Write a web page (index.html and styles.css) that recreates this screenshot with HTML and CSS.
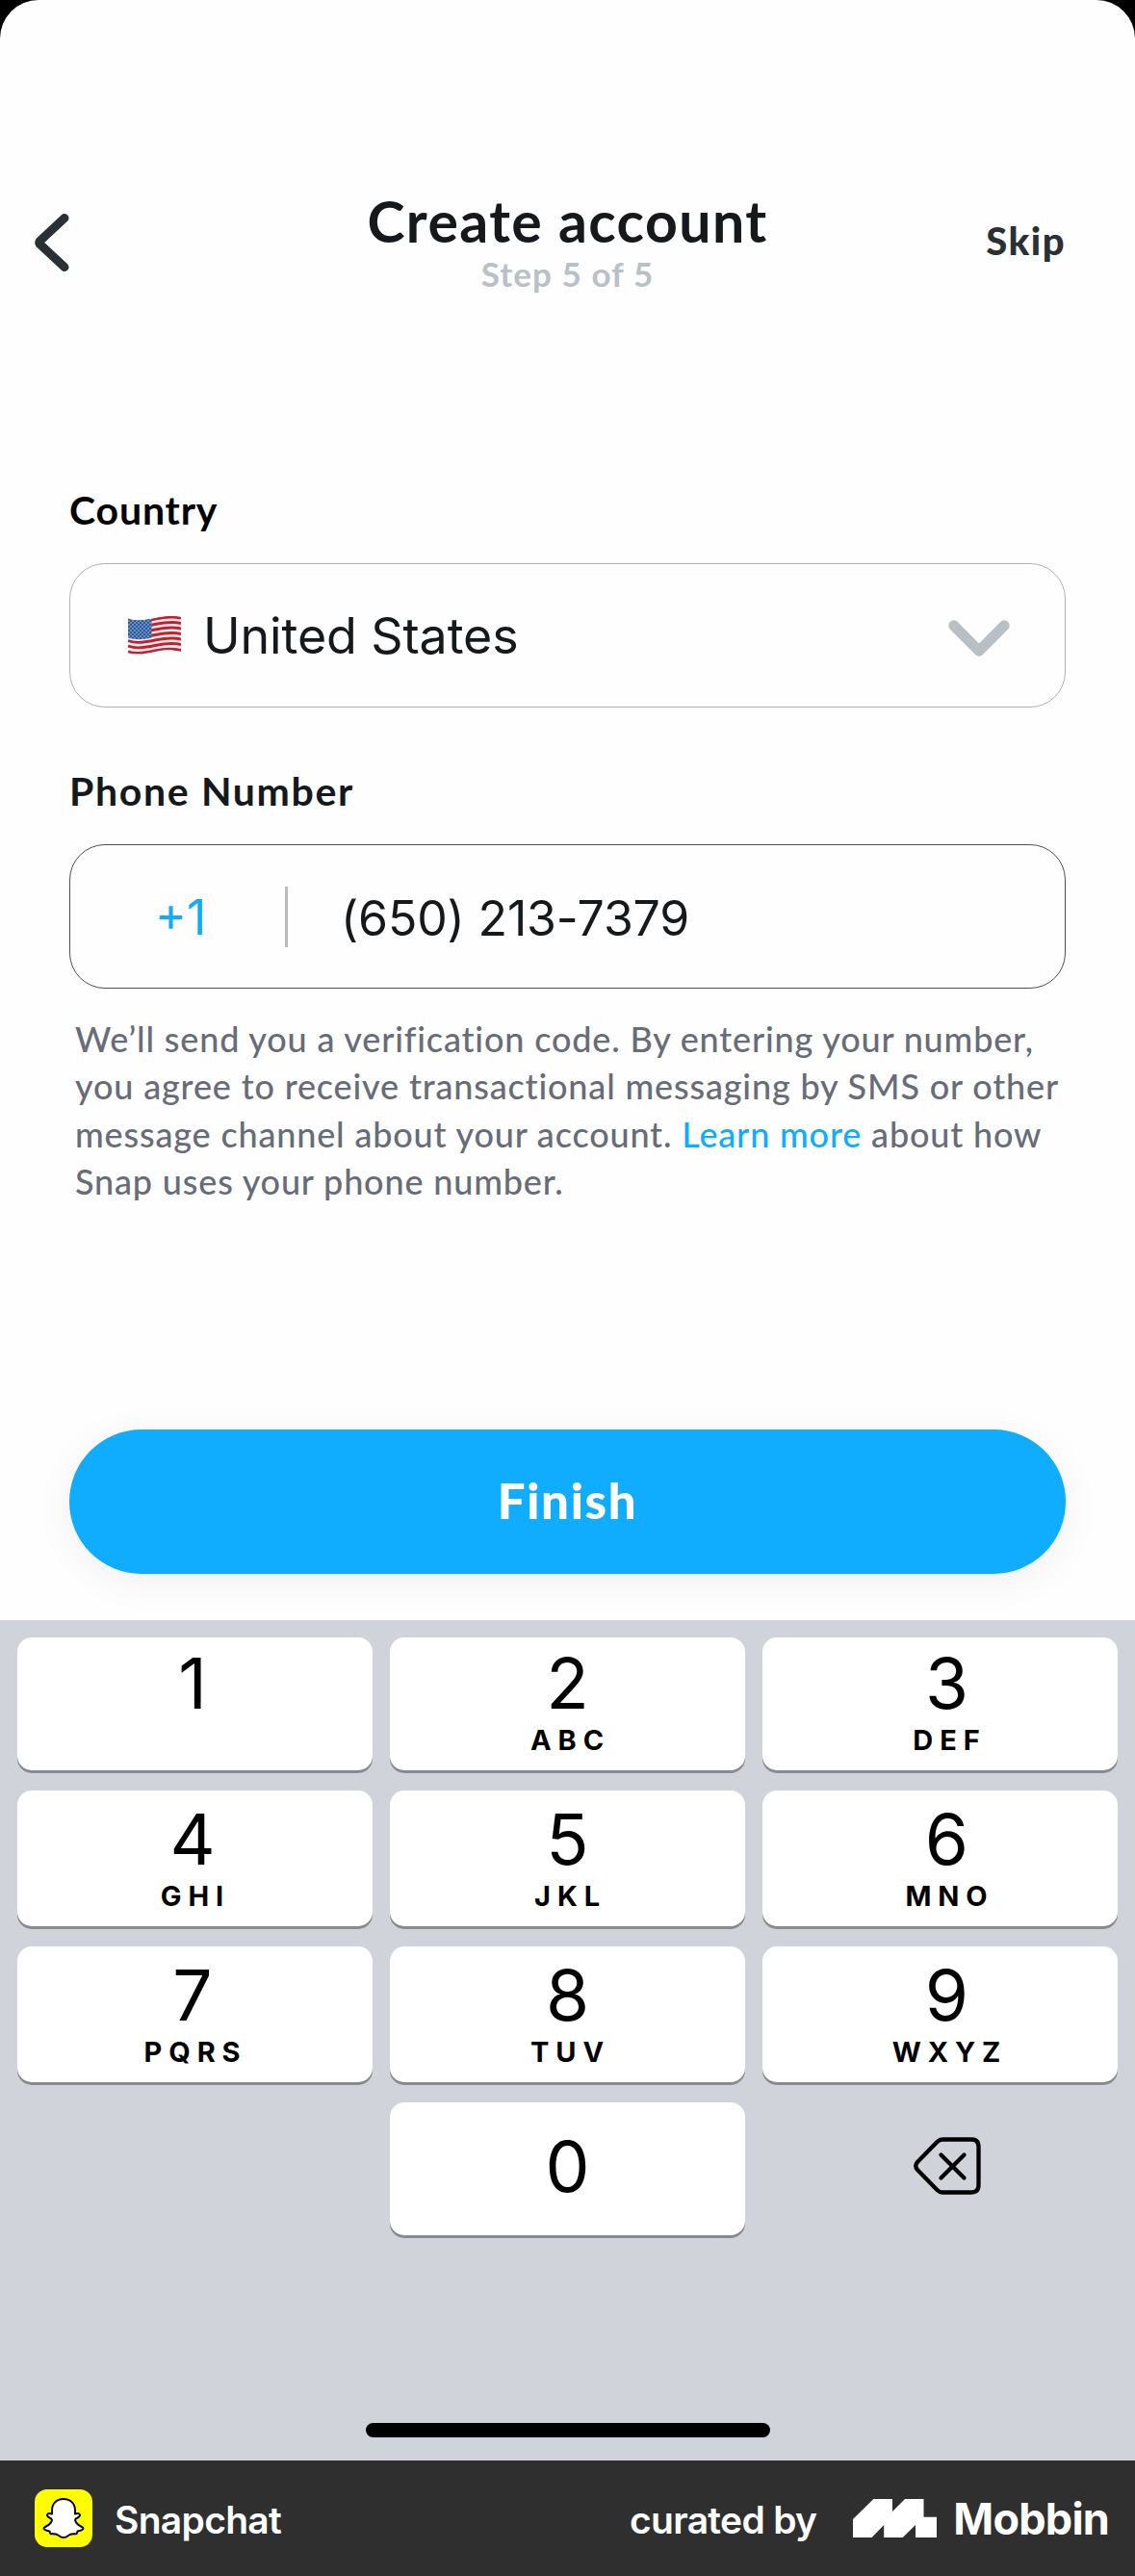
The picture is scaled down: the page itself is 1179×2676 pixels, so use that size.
FILE: index.html
```html
<!DOCTYPE html>
<html lang="en">
<head>
<meta charset="utf-8">
<title>Create account</title>
<link rel="stylesheet" href="styles.css">
</head>
<body>
<div class="backdrop">
<main class="screen">
  <header class="header">
    <button class="back" aria-label="Back">
      <svg width="36" height="60" viewBox="0 0 36 60"><path d="M31 4.500 5.500 28.300Q3.800 30 5.500 31.700L31 55.500" fill="none" stroke="#2b3034" stroke-width="9" stroke-linecap="round" stroke-linejoin="round"/></svg>
    </button>
    <div class="heading">
      <h1 class="title">Create account</h1>
      <p class="step">Step 5 of 5</p>
    </div>
    <a class="skip">Skip</a>
  </header>

  <form class="form">
    <label class="label label-country">Country</label>
    <div class="field field-country">
      <svg class="flag" width="55" height="40" viewBox="0 0 55 40">
        <defs>
          <clipPath id="flag-shape"><path d="M0 2.500C8 6 18 4 28 2S46-1 55 1V37C46 35 38 34.500 28 37S9 40.500 0 38.500Z"/></clipPath>
          <pattern id="stars" width="4" height="4" patternUnits="userSpaceOnUse"><circle cx="1" cy="1" r=".65" fill="#dce8f5"/><circle cx="3" cy="3" r=".65" fill="#dce8f5"/></pattern>
        </defs>
        <g clip-path="url(#flag-shape)">
          <path d="M0-2H55V42H0Z" fill="#f3f1f2"/>
          <g fill="none" stroke="#c6202f" stroke-width="2.900">
            <path d="M0 3.500C8 7 18 5 28 3S46 0 55 2"/>
            <path d="M0 9C8 12.500 18 10.500 28 8.500S46 5.500 55 7.500"/>
            <path d="M0 14.500C8 18 18 16 28 14S46 11 55 13"/>
            <path d="M0 20C8 23.500 18 21.500 28 19.500S46 16.500 55 18.500"/>
            <path d="M0 25.500C8 29 18 27 28 25S46 22 55 24"/>
            <path d="M0 31C8 34.500 18 32.500 28 30.500S46 27.500 55 29.500"/>
            <path d="M0 36.800C8 40 18 38.300 28 36S46 33.500 55 35.500"/>
          </g>
          <path d="M0 0H24.500V22.500C16 24.500 8 25 0 22.500Z" fill="#2a5c9f"/>
          <path d="M0 0H24.500V22.500C16 24.500 8 25 0 22.500Z" fill="url(#stars)"/>
        </g>
      </svg>
      <span class="country">United States</span>
      <svg class="chevron" width="64" height="38" viewBox="0 0 64 38"><path d="M5.800 5.800 32 32.200 58.200 5.800" fill="none" stroke="#b9c0c5" stroke-width="11" stroke-linecap="round" stroke-linejoin="round"/></svg>
    </div>

    <label class="label label-phone">Phone Number</label>
    <div class="field field-phone">
      <span class="code">+1</span>
      <span class="number">(650) 213-7379</span>
    </div>
    <p class="note">We’ll send you a verification code. By entering your number,<br>you agree to receive transactional messaging by SMS or other<br>message channel about your account. <a class="link">Learn more</a> about how<br>Snap uses your phone number.</p>
    <button class="finish" type="button">Finish</button>
  </form>
</main>
</div>

<section class="keyboard">
  <div class="keys">
    <div class="key left"><span class="digit">1</span><span class="letters"></span></div>
    <div class="key"><span class="digit">2</span><span class="letters">ABC</span></div>
    <div class="key right"><span class="digit">3</span><span class="letters">DEF</span></div>
    <div class="key left"><span class="digit">4</span><span class="letters">GHI</span></div>
    <div class="key"><span class="digit">5</span><span class="letters">JKL</span></div>
    <div class="key right"><span class="digit">6</span><span class="letters">MNO</span></div>
    <div class="key left"><span class="digit">7</span><span class="letters">PQRS</span></div>
    <div class="key"><span class="digit">8</span><span class="letters">TUV</span></div>
    <div class="key right"><span class="digit">9</span><span class="letters">WXYZ</span></div>
    <div class="blank"></div>
    <div class="key zero"><span class="digit">0</span></div>
    <div class="blank right">
      <svg width="70" height="60" viewBox="0 0 70 60" fill="none" stroke="#000" stroke-width="4.300" stroke-linecap="round" stroke-linejoin="round"><path d="M30 2.500H60Q67.500 2.500 67.500 10V50Q67.500 57.500 60 57.500H30Q27 57.500 24.500 55L4 34Q.500 30 4 26L24.500 5Q27 2.500 30 2.500Z"/><path d="M28.500 18.500 52.500 42.500M52.500 18.500 28.500 42.500"/></svg>
    </div>
  </div>
  <div class="home"></div>
</section>

<footer class="footer">
  <svg class="app-icon" width="60" height="60" viewBox="0 0 60 60">
    <rect width="60" height="60" rx="13" fill="#fffc00"/>
    <path d="M30 10C22.500 10 18 15 18 22V25.500C16 25 13.500 24.500 13 26.500C12.600 28.500 15.500 29.500 17.500 30.800C18.500 32 17 34.500 15 36.500C13 38.500 9.500 39 9.500 40.500C9.500 42.300 13 43 15.500 43.500C16 44.500 15.500 46 17 46.200C19 46.400 21 45.800 23.500 47C25.500 48.200 27 50 30 50S34.500 48.200 36.500 47C39 45.800 41 46.400 43 46.200C44.500 46 44 44.500 44.500 43.500C47 43 50.500 42.300 50.500 40.500C50.500 39 47 38.500 45 36.500C43 34.500 41.500 32 42.500 30.800C44.500 29.500 47.400 28.500 47 26.500C46.500 24.500 44 25 42 25.500V22C42 15 37.500 10 30 10Z" fill="#fff" stroke="#000" stroke-width="2" stroke-linejoin="round"/>
  </svg>
  <span class="app-name">Snapchat</span>
  <span class="curated">curated by</span>
  <svg class="mobbin-mark" width="87" height="40" viewBox="0 0 87 40"><path d="M0 21 21.400 0H41V13L54 0H73.500V18.700H87V40H65V27L51.700 40H32.200V27L19.600 40H0Z" fill="#fff"/></svg>
  <span class="mobbin">Mobbin</span>
</footer>
</body>
</html>
```
FILE: styles.css
```css
* { box-sizing: border-box; margin: 0; padding: 0; }
body {
  width: 1179px;
  height: 2676px;
  display: flex;
  flex-direction: column;
  overflow: hidden;
  font-family: Inter, "Liberation Sans", sans-serif;
}
button { border: 0; background: none; }
svg { display: block; flex: none; }
span, a { white-space: nowrap; }

.backdrop { background: #000; height: 1683px; }
.screen {
  height: 1683px;
  display: flex;
  flex-direction: column;
  background: #fefefe;
  border-radius: 40px 40px 0 0;
  padding-top: 200px;
  font-family: Lato, "Open Sans", sans-serif;
}

.header {
  height: 104px;
  padding: 0 74px 0 36px;
  display: grid;
  grid-template-columns: 341px 1fr 341px;
  align-items: center;
  margin-right: -38px;
}
.heading { text-align: center; }
.title { font-size: 59px; line-height: 60px; font-weight: 700; letter-spacing: 1.400px; color: #16191c; }
.step { margin-top: 4px; font-size: 35px; line-height: 40px; font-weight: 700; letter-spacing: 1.100px; color: #b9c0c7; }
.skip { justify-self: end; padding-right: 36px; padding-bottom: 4px; font-size: 40px; font-weight: 900; letter-spacing: 1.500px; color: #2b3034; }

.form {
  flex: 1;
  display: flex;
  flex-direction: column;
  padding: 202px 72px 48px;
}
.label { font-size: 41px; line-height: 48px; font-weight: 700; letter-spacing: .850px; color: #16191c; }
.label-country { color: #000; }
.label-phone { margin-top: 63px; letter-spacing: 1.650px; }
.field {
  height: 150px;
  display: flex;
  align-items: center;
  border-radius: 37px;
  font-family: Inter, "Liberation Sans", sans-serif;
  color: #16191c;
}
.field-country { margin-top: 31px; border: 1px solid #b0b1b2; padding: 0 57px 0 60px; }
.country { margin-left: 23px; padding-top: 2px; font-size: 52px; line-height: 60px; letter-spacing: -.150px; }
.chevron { margin-left: auto; margin-top: 5px; }
.field-phone { margin-top: 31px; border: 1px solid #4c4f53; }
.code {
  width: 226px;
  height: 63px;
  padding: 1px 0 0 88px;
  border-right: 3px solid #bbb;
  font-size: 50px;
  line-height: 63px;
  color: #10adff;
}
.number { margin-left: 55px; padding-top: 3px; font-size: 50px; line-height: 60px; letter-spacing: -.150px; }
.note { margin: 28px 0 0 6px; font-size: 36px; line-height: 49.330px; font-weight: 500; letter-spacing: .830px; color: #676c78; white-space: nowrap; }
.link { color: #10adff; }
.finish {
  margin-top: auto;
  height: 150px;
  padding-bottom: 4px;
  border-radius: 75px;
  background: #10adff;
  box-shadow: 0 8px 40px rgba(0, 0, 0, .06);
  font-family: inherit;
  font-size: 51px;
  font-weight: 900;
  letter-spacing: 1.600px;
  color: #fff;
}

.keyboard {
  height: 873px;
  padding: 18px 18px 24px;
  display: flex;
  flex-direction: column;
  background: #d0d3da;
}
.keys {
  display: grid;
  grid-template-columns: repeat(3, 369px);
  grid-template-rows: 138px 141px 141px 138px;
  gap: 21px 18px;
}
.key {
  display: flex;
  flex-direction: column;
  align-items: center;
  justify-content: flex-end;
  padding-bottom: 16px;
  border-radius: 15px;
  background: #fff;
  box-shadow: 0 3px 0 #898a8d;
  color: #000;
}
.left { padding-right: 5px; }
.right { padding-left: 14px; }
.digit { font-size: 73px; line-height: 60px; }
.letters { height: 30px; margin-top: 14px; padding-left: 6px; font-size: 29px; line-height: 30px; font-weight: 700; letter-spacing: 6.900px; }
.zero { justify-content: center; padding: 0 0 5px; }
.blank { display: flex; align-items: center; justify-content: center; padding-bottom: 7px; }
.home { width: 420px; height: 15px; margin: auto auto 0; border-radius: 8px; background: #000; }

.footer {
  height: 120px;
  padding: 0 27px 0 36px;
  display: flex;
  align-items: center;
  background: #2f2f2f;
  color: #fff;
}
.app-name, .curated { padding-top: 3px; font-size: 39px; line-height: 48px; font-weight: 600; letter-spacing: -.700px; }
.app-name { margin-left: 23px; }
.curated { margin-left: auto; }
.mobbin-mark { margin-left: 38px; }
.mobbin { margin-left: 17px; padding-top: 2px; font-size: 45px; line-height: 48px; font-weight: 700; letter-spacing: -.800px; }
```
